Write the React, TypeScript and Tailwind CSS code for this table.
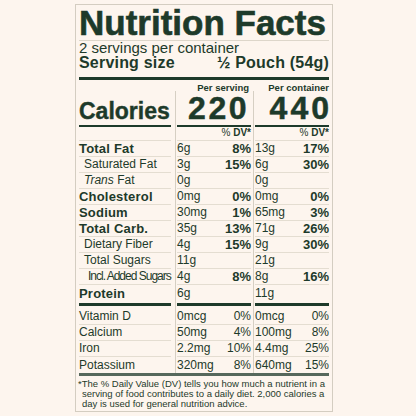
import React from 'react';

const INK = 'text-[#1d3a2a]';

type Nutrient = {
  label: React.ReactNode;
  a: string;
  ap?: string;
  b: string;
  bp?: string;
  bold?: boolean;
  indent?: 0 | 1 | 2;
};

const nutrients: Nutrient[] = [
  { label: 'Total Fat', a: '6g', ap: '8%', b: '13g', bp: '17%', bold: true },
  { label: 'Saturated Fat', a: '3g', ap: '15%', b: '6g', bp: '30%', indent: 1 },
  { label: <><i>Trans</i> Fat</>, a: '0g', b: '0g', indent: 1 },
  { label: 'Cholesterol', a: '0mg', ap: '0%', b: '0mg', bp: '0%', bold: true },
  { label: 'Sodium', a: '30mg', ap: '1%', b: '65mg', bp: '3%', bold: true },
  { label: 'Total Carb.', a: '35g', ap: '13%', b: '71g', bp: '26%', bold: true },
  { label: 'Dietary Fiber', a: '4g', ap: '15%', b: '9g', bp: '30%', indent: 1 },
  { label: 'Total Sugars', a: '11g', b: '21g', indent: 1 },
  { label: 'Incl. Added Sugars', a: '4g', ap: '8%', b: '8g', bp: '16%', indent: 2 },
  { label: 'Protein', a: '6g', b: '11g', bold: true },
];

const minerals = [
  { label: 'Vitamin D', a: '0mcg', ap: '0%', b: '0mcg', bp: '0%' },
  { label: 'Calcium', a: '50mg', ap: '4%', b: '100mg', bp: '8%' },
  { label: 'Iron', a: '2.2mg', ap: '10%', b: '4.4mg', bp: '25%' },
  { label: 'Potassium', a: '320mg', ap: '8%', b: '640mg', bp: '15%' },
];

// three columns: label | per serving | per container, split by thin vertical rules
const Cols = ({
  first,
  second,
  third,
  cell,
}: {
  first: React.ReactNode;
  second: React.ReactNode;
  third: React.ReactNode;
  cell: string;
}) => (
  <div className="flex">
    <div className={`w-[92px] mr-[4px] ${cell}`}>{first}</div>
    <div className="border-l border-[#d6cfc3] pl-[1px] pr-[2px]">
      <div className={`w-[74px] ${cell}`}>{second}</div>
    </div>
    <div className="border-l border-[#d6cfc3] pl-[1px]">
      <div className={`w-[74px] ${cell}`}>{third}</div>
    </div>
  </div>
);

const Pair = ({ v, p, boldPct = true }: { v: string; p?: string; boldPct?: boolean }) => (
  <div className="flex justify-between w-full">
    <span className="text-[12px]">{v}</span>
    {p && <span className={boldPct ? 'text-[13px] font-bold' : 'text-[12px]'}>{p}</span>}
  </div>
);

export default function App() {
  return (
    <div className={`w-[416px] h-[416px] bg-[#fdf5ee] pt-[4px] pl-[75px] font-['Liberation_Sans',Arial,sans-serif] ${INK}`}>
      <div className="w-[258px] border border-[#d4cdc1] px-[3px]">
        <div className="text-[35px] leading-[35px] font-bold whitespace-nowrap [-webkit-text-stroke:0.6px_#1d3a2a]">
          Nutrition Facts
        </div>
        <div className="border-b border-[#ddd6ca]" />
        <div className="text-[15px] leading-[14px]">2 servings per container</div>
        <div className="flex justify-between text-[16px] leading-[16px] font-bold tracking-[0.2px]">
          <span>Serving size</span>
          <span>½ Pouch (54g)</span>
        </div>
        <div className="mt-[6px] h-[3px] bg-[#1d3a2a]" />

        {/* calories */}
        <div className="flex">
          <div className="w-[92px] mr-[4px] flex flex-col justify-end border-b-2 border-[#1d3a2a] pb-[2px]">
            <span className="text-[23px] leading-[24px] font-bold [-webkit-text-stroke:0.4px_#1d3a2a]">Calories</span>
          </div>
          <div className="mt-[11px] flex border-l border-[#d6cfc3] pl-[1px] pr-[2px]">
            <div className="-mt-[8px] w-[74px] flex flex-col items-end border-b-2 border-[#1d3a2a] pb-[2px]">
              <span className="text-[9.5px] leading-[10px] font-bold pr-[2px]">Per serving</span>
              <span className="text-[32px] leading-[30px] font-bold tracking-[2.5px] pr-[2px] [-webkit-text-stroke:0.5px_#1d3a2a]">220</span>
            </div>
          </div>
          <div className="mt-[11px] flex border-l border-[#d6cfc3] pl-[1px]">
            <div className="-mt-[8px] w-[74px] flex flex-col items-end border-b-2 border-[#1d3a2a] pb-[2px]">
              <span className="text-[9.5px] leading-[10px] font-bold">Per container</span>
              <span className="text-[32px] leading-[30px] font-bold tracking-[3px] -mr-[3px] [-webkit-text-stroke:0.5px_#1d3a2a]">440</span>
            </div>
          </div>
        </div>

        <Cols
          cell="h-[14px] border-b border-[#e4ddd1] flex justify-end items-start text-[10px] leading-[11px]"
          first={null}
          second={<span>% <b>DV*</b></span>}
          third={<span>% <b>DV*</b></span>}
        />

        {nutrients.map((n, i) => {
          const last = i === nutrients.length - 1;
          const pad = n.indent === 2 ? 'pl-[9px]' : n.indent === 1 ? 'pl-[5px]' : '';
          return (
            <Cols
              key={i}
              cell={`h-[16px] flex items-center leading-[15px] ${last ? '' : 'border-b border-[#e4ddd1]'}`}
              first={
                <span
                  className={`${pad} whitespace-nowrap ${
                    n.bold ? 'text-[13px] font-bold tracking-[0.2px]' : n.indent === 2 ? 'text-[12px] tracking-[-1px]' : 'text-[12px]'
                  }`}
                >
                  {n.label}
                </span>
              }
              second={<Pair v={n.a} p={n.ap} />}
              third={<Pair v={n.b} p={n.bp} />}
            />
          );
        })}

        <Cols
          cell="pt-[2px]"
          first={<div className="h-[3px] bg-[#1d3a2a]" />}
          second={<div className="h-[3px] bg-[#1d3a2a]" />}
          third={<div className="h-[3px] bg-[#1d3a2a]" />}
        />

        {minerals.map((m, i) => {
          const h = i === 0 ? 'h-[19px] pt-[2px]' : 'h-[16px]';
          const last = i === minerals.length - 1;
          return (
            <Cols
              key={m.label}
              cell={`${h} flex items-center leading-[15px] ${last ? '' : 'border-b border-[#e4ddd1]'}`}
              first={<span className="text-[12px]">{m.label}</span>}
              second={<Pair v={m.a} p={m.ap} boldPct={false} />}
              third={<Pair v={m.b} p={m.bp} boldPct={false} />}
            />
          );
        })}

        <div className="h-[3px] bg-[#56685c]" />
        <div className="pt-[3px] pb-[2px] pl-[3px] [text-indent:-4px] text-[9.5px] leading-[10px] whitespace-nowrap">
          *The % Daily Value (DV) tells you how much a nutrient in a
          <br />
          serving of food contributes to a daily diet. 2,000 calories a
          <br />
          day is used for general nutrition advice.
        </div>
      </div>
    </div>
  );
}
